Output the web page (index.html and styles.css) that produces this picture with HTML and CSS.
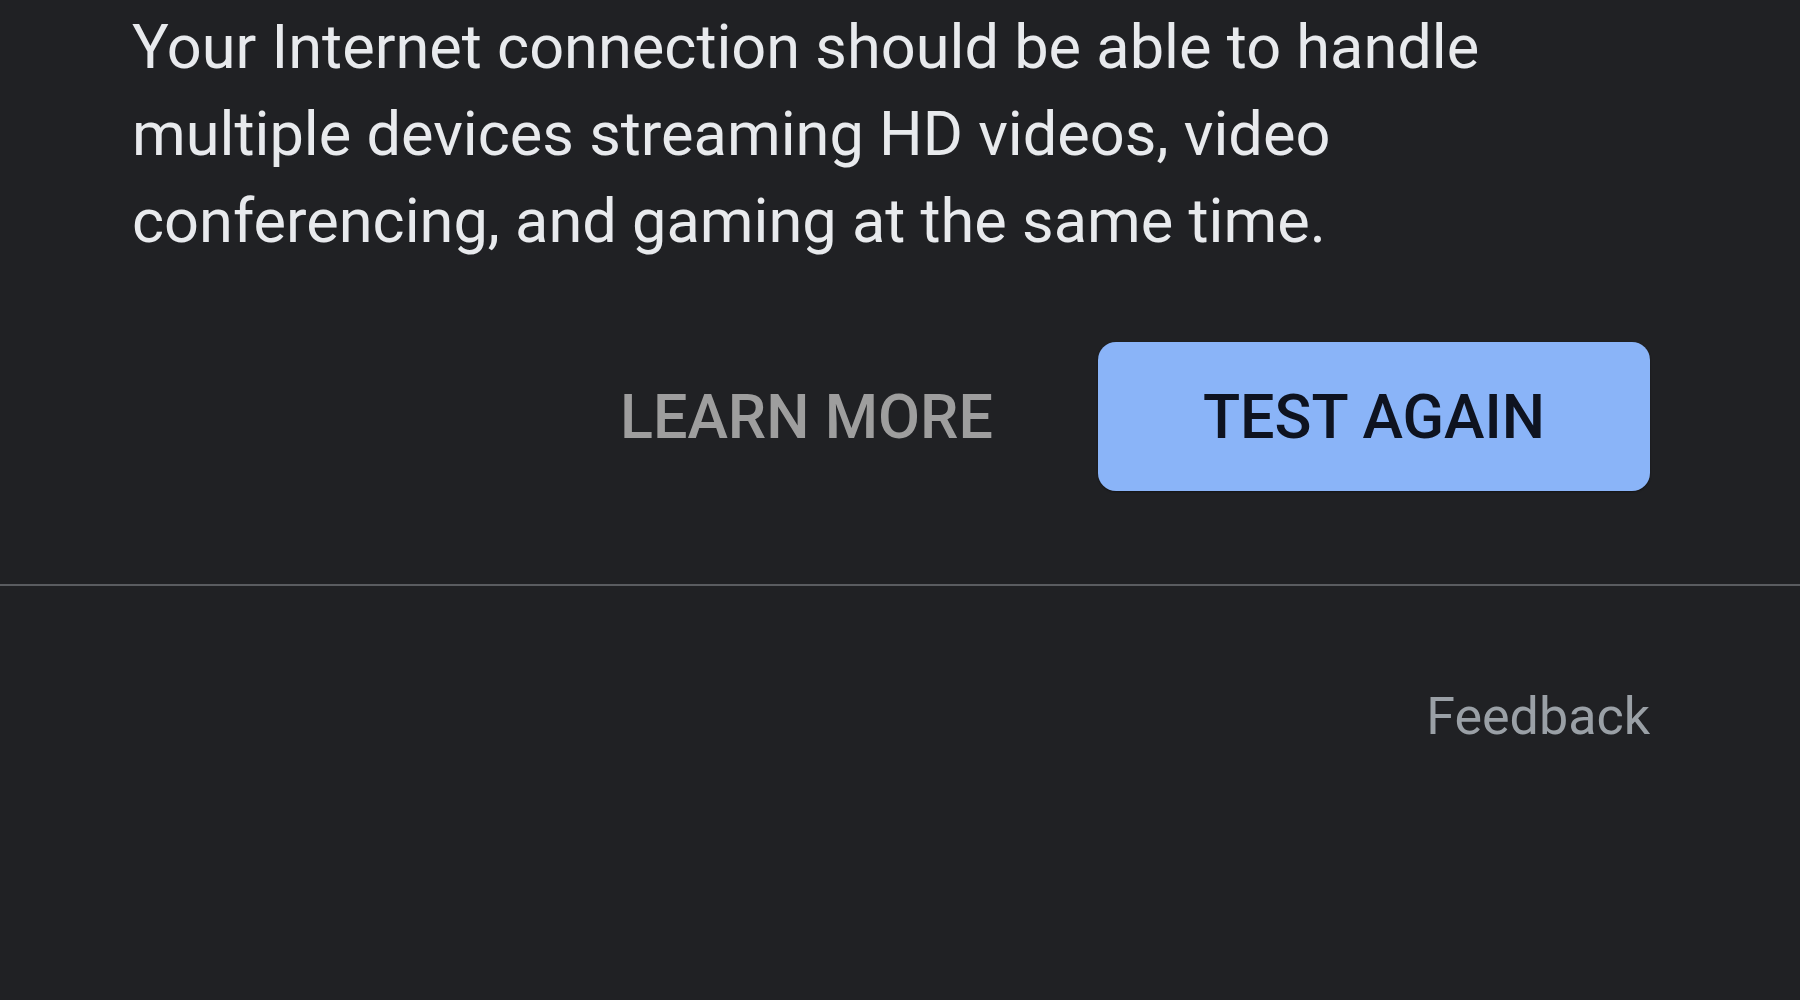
FILE: index.html
```html
<!DOCTYPE html>
<html>
<head>
  <meta charset="UTF-8">
  <meta name="viewport" content="width=device-width, initial-scale=1.0">
  <title>Speed test result</title>
  <link rel="stylesheet" href="styles.css">
</head>
<body>
  <main class="result">
    <p class="summary">Your Internet connection should be able to handle multiple devices streaming HD videos, video conferencing, and gaming at the same time.</p>
    <div class="actions">
      <button class="btn btn-text">LEARN MORE</button>
      <button class="btn btn-filled">TEST AGAIN</button>
    </div>
  </main>
  <hr class="divider">
  <footer class="footer">
    <a class="feedback" href="#">Feedback</a>
  </footer>
</body>
</html>
```

FILE: styles.css
```css
body {
  margin: 0;
  background-color: #202124;
  color: #e8eaed;
  font-family: Roboto, "Liberation Sans", sans-serif;
}
.result {
  padding: 4px 150px 0 132px;
}
.summary {
  margin: 0;
  font-size: 61.3px;
  line-height: 87px;
}
.actions {
  display: flex;
  justify-content: flex-end;
  margin-top: 77px;
}
.btn {
  height: 149px;
  padding: 0 105px;
  border: none;
  border-radius: 18px;
  font-family: Roboto, "Liberation Sans", sans-serif;
  font-size: 61px;
  font-weight: 500;
  background: transparent;
}
.btn-text {
  color: #9e9e9e;
}
.btn-filled {
  background-color: #8ab4f8;
  color: #0e1320;
  box-shadow: 0 1px 2px rgba(0, 0, 0, 0.4);
}
.divider {
  margin: 93px 0 0;
  border: none;
  height: 2px;
  background-color: #5a5c60;
}
.footer {
  display: flex;
  justify-content: flex-end;
  padding: 100px 150px 0 0;
}
.feedback {
  font-size: 52px;
  color: #9aa0a6;
  text-decoration: none;
}
```
